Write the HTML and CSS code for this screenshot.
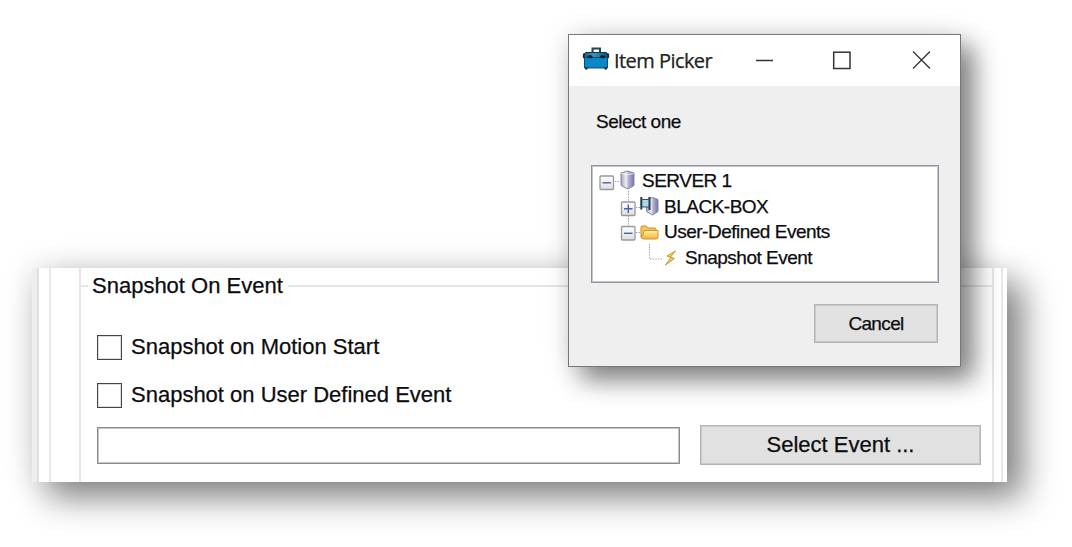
FILE: index.html
```
<!DOCTYPE html>
<html lang="en">
<head>
<meta charset="utf-8">
<title>Item Picker</title>
<link rel="stylesheet" href="styles.css">
</head>
<body>
<main class="panel">
  <div class="edge"></div>
  <div class="frame">
    <section class="group">
      <div class="legend"><span class="legend-text">Snapshot On Event</span></div>
      <div class="group-body">
        <label class="check"><span class="box"></span><span>Snapshot on Motion Start</span></label>
        <label class="check"><span class="box"></span><span>Snapshot on User Defined Event</span></label>
        <div class="event-row">
          <div class="field"></div>
          <div class="button select">Select Event ...</div>
        </div>
      </div>
    </section>
  </div>
</main>

<div class="dialog">
  <header class="titlebar">
    <svg class="toolbox" width="28" height="24" viewBox="0 0 28 24">
      <defs><linearGradient id="tb" x1="0" y1="0" x2="1" y2="0"><stop offset="0" stop-color="#0b5f93"/><stop offset=".4" stop-color="#3a94bd"/><stop offset="1" stop-color="#0b4a72"/></linearGradient></defs>
      <path d="M10.500 5V1.500h7.500v3.500" fill="none" stroke="#234454" stroke-width="2"/>
      <path d="M3.500 5.500h21l2 2.500v3H1.500V8z" fill="url(#tb)" stroke="#12394f"/>
      <path d="M2.500 10.500h23v10.500h-23z" fill="#0987c8" stroke="#134b6b"/>
      <path d="M1.800 6.500v4M26.200 6.500v4M3 21.500h2.500M22.500 21.500h2.500" stroke="#182a35" stroke-width="1.800"/>
      <ellipse cx="8" cy="9.800" rx="2.600" ry="1.500" fill="#071722"/><ellipse cx="20.500" cy="9.800" rx="2.600" ry="1.500" fill="#071722"/>
    </svg>
    <span class="title">Item Picker</span>
    <svg class="controls" width="178" height="24" viewBox="0 0 178 24" fill="none" stroke="#333" stroke-width="1.500">
      <path d="M1 12.500h17"/>
      <rect x="78.700" y="4.200" width="16.300" height="16.300"/>
      <path d="M158 3.500l17 17M175 3.500l-17 17" stroke-width="1.300"/>
    </svg>
  </header>
  <div class="content">
    <div class="prompt">Select one</div>
    <div class="tree">
      <div class="row">
        <svg width="43" height="26" viewBox="0 0 43 26">
          <defs><linearGradient id="srv" x1="0" x2="1"><stop offset="0" stop-color="#a5a4bd"/><stop offset=".4" stop-color="#efeff5"/><stop offset=".55" stop-color="#b5b5d6"/><stop offset="1" stop-color="#7774ad"/></linearGradient>
          <linearGradient id="exp" x1="0" y1="0" x2="0" y2="1"><stop offset="0" stop-color="#fff"/><stop offset="1" stop-color="#dedede"/></linearGradient></defs>
          <path class="dots" d="M22 13.500h5M35.500 23v3"/>
          <rect class="exp" x="7" y="8" width="13.500" height="13.500" rx="1"/>
          <path class="sign" d="M9.500 14.800h8.500"/>
          <path d="M28 5l6.500-2 6.500 2v12.500l-6 3.500-7-3.500z" fill="url(#srv)" stroke="#85849a"/>
          <path d="M28.500 5.500l6 1.200 6-1.200" fill="none" stroke="#fafafc" stroke-width=".8"/>
        </svg><span class="label">SERVER 1</span>
      </div>
      <div class="row">
        <svg width="65" height="26" viewBox="0 0 65 26">
          <path class="dots" d="M35.500 0v7M35.500 22v4M43 13.500h4"/>
          <rect class="exp" x="28.500" y="8" width="13.500" height="13.500" rx="1"/>
          <path class="sign" d="M31 14.800h8.500M35.300 10.500v8.500"/>
          <path d="M54 5.500l5.500-2 5.500 2v12l-5.500 3.500-6-3.500z" fill="url(#srv)" stroke="#85849a"/>
          <rect x="49" y="5" width="7" height="8" fill="#a7daec"/>
          <path d="M48.300 3v12.500M56.500 3v13" stroke="#263b48" stroke-width="2"/>
          <path d="M48 5.500h9M48 13h9" stroke="#38505f" stroke-width="1.200"/>
        </svg><span class="label">BLACK-BOX</span>
      </div>
      <div class="row">
        <svg width="65" height="26" viewBox="0 0 65 26">
          <defs><linearGradient id="fold" x1="0" y1="0" x2="0" y2="1"><stop offset="0" stop-color="#fff0a3"/><stop offset="1" stop-color="#eeb43c"/></linearGradient></defs>
          <path class="dots" d="M35.500 -1v8M43 13.500h4"/>
          <rect class="exp" x="28.500" y="7.500" width="13.500" height="13.500" rx="1"/>
          <path class="sign" d="M31 14.300h8.500"/>
          <path d="M48 18V8.500q0-1.500 1.500-1.500h3.500l2 2h6.500q1.500 0 1.500 1.500v7" fill="#f3c75c" stroke="#c28b27"/>
          <path d="M51 11.500h14v6.500q0 2-2 2h-12q-3 0-3-2.500l2-1z" fill="url(#fold)" stroke="#c99431"/>
        </svg><span class="label">User-Defined Events</span>
      </div>
      <div class="row">
        <svg width="86" height="26" viewBox="0 0 86 26">
          <path class="dots" d="M56.500 -1v15h13"/>
          <path d="M82.500 6l-8.500 5 4 1.500-5.500 7.500 9-6.500-4-1.500z" fill="#ffd24e" stroke="#c8842e" stroke-width=".9"/>
        </svg><span class="label">Snapshot Event</span>
      </div>
    </div>
    <div class="button cancel">Cancel</div>
  </div>
</div>
</body>
</html>
```
FILE: styles.css
```
* { box-sizing: border-box; }
html, body { height: 100%; }
body {
  margin: 0;
  overflow: hidden;
  background: #fff;
  color: #0c0c0f;
  font-family: "Liberation Sans", Arial, sans-serif;
  -webkit-text-stroke: .25px;
  padding: 268px 65px 0 32px;
}

/* settings panel */
.panel {
  display: flex;
  height: 214px;
  background: #fff;
  font-size: 22px;
  box-shadow: 16px 16px 32px rgba(0, 0, 0, .46), 0 0 32px rgba(0, 0, 0, .11);
}
.edge { width: 7px; background: #eee; border-right: 2px solid #e0e0e0; }
.frame {
  flex: 1;
  margin: 0 4px 0 10px;
  padding: 0 7px 0 28px;
  border: solid #e8e8e8;
  border-width: 0 2px;
}
.group {
  height: 100%;
  border: solid #e6e6e6;
  border-width: 0 2px;
}
.legend { display: flex; align-items: center; height: 35px; }
.legend::before, .legend::after { content: ""; height: 2px; background: #e6e6e6; }
.legend::before { width: 7px; }
.legend::after { flex: 1; margin-left: 5px; }
.legend-text { padding-left: 4px; line-height: 35px; }
.group-body { padding: 32px 11px 0 16px; }
.check { display: flex; align-items: center; gap: 9px; height: 25px; margin-bottom: 23px; line-height: 24px; }
.check span:last-child { margin-top: -1px; }
.box { width: 25px; height: 25px; border: 1px solid #444; box-shadow: inset 0 0 0 1px #ddd; background: #fff; }
.event-row { display: flex; gap: 20px; margin-top: -6px; }
.field { width: 583px; height: 37px; margin-top: 2px; border: 1px solid #8c8c8c; box-shadow: inset 0 0 0 1px #c4c4c4; }
.button { display: flex; justify-content: center; align-items: center; background: #e1e1e1; border: 1px solid #b3b3b3; box-shadow: inset 0 0 0 1px #cacaca; }
.select { flex: 1; height: 40px; }

/* picker window, floating over the panel */
.dialog {
  position: absolute;
  left: 568px;
  top: 34px;
  width: 393px;
  height: 333px;
  background: #efefef;
  border: 1.5px solid #777;
  font-size: 19px;
  letter-spacing: -.5px;
  box-shadow: 13px 13px 24px rgba(0, 0, 0, .48), 0 0 28px rgba(0, 0, 0, .1);
}
.titlebar { display: flex; align-items: center; height: 51px; padding: 0 27px 0 13px; background: #fff; }
.toolbox { margin-top: -3px; }
.controls { margin-top: -2px; }
.title {
  flex: 1;
  padding-left: 4px;
  font-family: "Open Sans", "Noto Sans", sans-serif;
  font-size: 20px;
  letter-spacing: -.55px;
  color: #222;
}
.content { padding: 24px 22px 0 22px; }
.prompt { padding-left: 5px; line-height: 24px; }
.tree { height: 118px; width: 348px; margin-top: 31px; border: 1px solid #8f959e; box-shadow: inset 0 0 0 1px #c3c7cd; background: #fff; padding: 2px 0 0 1px; }
.row { display: flex; height: 25.7px; line-height: 26px; }
.row svg { flex: none; overflow: visible; }
.label { padding-left: 6px; white-space: nowrap; }
.dots { fill: none; stroke: #999; stroke-width: 1; stroke-dasharray: 1.300 1.300; }
.exp { fill: url(#exp); stroke: #999; stroke-width: 1.300; }
.sign { fill: none; stroke: #4563b0; stroke-width: 1.400; }
.cancel { width: 124px; height: 39px; margin: 21px 0 0 auto; letter-spacing: -.65px; }
```
